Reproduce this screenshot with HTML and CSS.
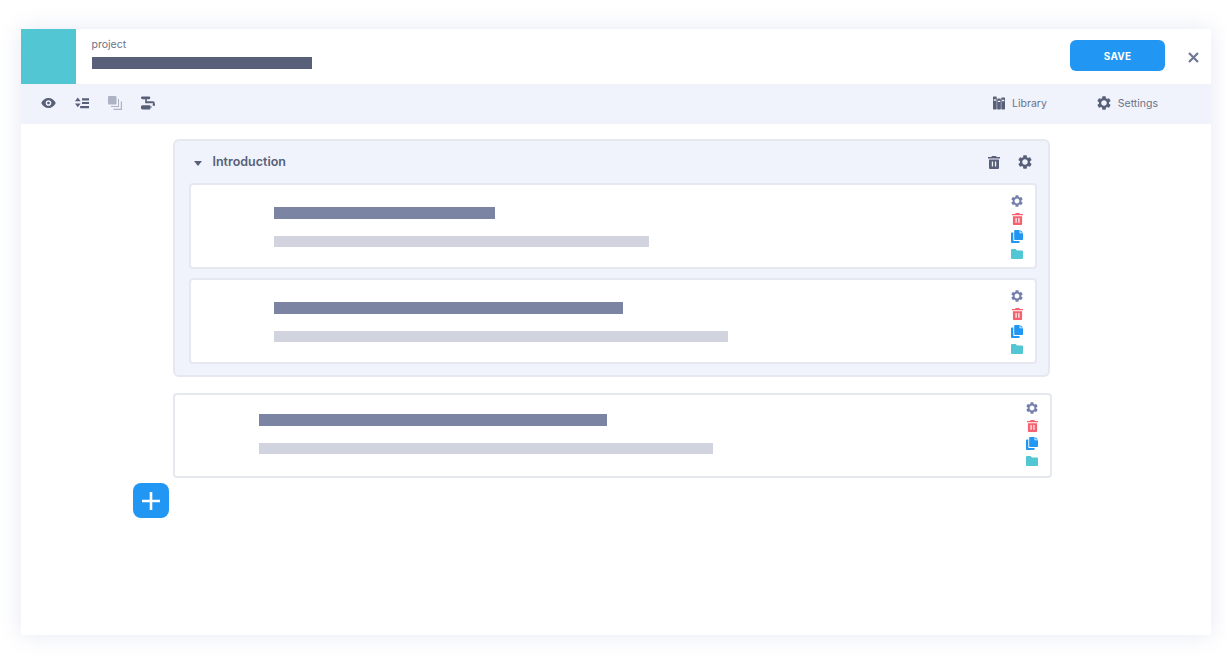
FILE: index.html
```html
<!DOCTYPE html>
<html>

<head>
	<meta charset="UTF-8">
	<title>Project editor</title>
	<link rel="stylesheet" href="styles.css">
</head>

<body>
	<!--icons used more than once-->
	<svg class="defs" width="0" height="0">
		<symbol id="i-gear" viewBox="2 2 20 20">
			<path d="M19.14 12.94c.04-.3.06-.61.06-.94 0-.32-.02-.64-.07-.94l2.03-1.58c.18-.14.23-.41.12-.61l-1.92-3.32c-.12-.22-.37-.29-.59-.22l-2.39.96c-.5-.38-1.03-.7-1.62-.94l-.36-2.54c-.04-.24-.24-.41-.48-.41h-3.84c-.24 0-.43.17-.47.41l-.36 2.54c-.59.24-1.13.57-1.62.94l-2.39-.96c-.22-.08-.47 0-.59.22L2.74 8.87c-.12.21-.08.47.12.61l2.03 1.58c-.05.3-.09.63-.09.94s.02.64.07.94l-2.03 1.58c-.18.14-.23.41-.12.61l1.92 3.32c.12.22.37.29.59.22l2.39-.96c.5.38 1.03.7 1.62.94l.36 2.54c.05.24.24.41.48.41h3.84c.24 0 .44-.17.47-.41l.36-2.54c.59-.24 1.13-.56 1.62-.94l2.39.96c.22.08.47 0 .59-.22l1.92-3.32c.12-.22.07-.47-.12-.61l-2.01-1.58zM12 16c-2.2 0-4-1.8-4-4s1.8-4 4-4 4 1.8 4 4-1.8 4-4 4z" fill="currentColor"/>
		</symbol>
		<symbol id="i-trash" viewBox="0 0 12 13">
			<path fill-rule="evenodd" d="M4 0h4l.6 1H12v1.500H0V1h3.400zM1 3.500h10V12a1 1 0 0 1-1 1H2a1 1 0 0 1-1-1zM3.800 5.500v5h1.300v-5zm3.100 0v5h1.300v-5z" fill="currentColor"/>
		</symbol>
		<symbol id="i-copy" viewBox="0 0 12 13">
			<path d="M4 0h4.600v3.200H12V9.200a.8.800 0 0 1-.8.8H4a.8.800 0 0 1-.8-.8V.8A.8.800 0 0 1 4 0zM9.400 0 12 2.500H9.400zM0 3.400a.8.800 0 0 1 .8-.8h1.500v7.600c0 .4.300.7.700.7h5.600v1.300a.8.800 0 0 1-.8.800H.8a.8.800 0 0 1-.8-.8z" fill="currentColor"/>
		</symbol>
		<symbol id="i-folder" viewBox="0 0 12 10">
			<path d="M0 1a1 1 0 0 1 1-1h3.600L6 1.400h5a1 1 0 0 1 1 1V9a1 1 0 0 1-1 1H1a1 1 0 0 1-1-1z" fill="currentColor"/>
		</symbol>
	</svg>

	<div class="window">
		<div class="topbar">
			<div class="logo"></div>
			<div class="project">
				<span class="project-label">project</span>
				<div class="bar project-name"></div>
			</div>
			<button class="save" type="button">SAVE</button>
			<button class="close" type="button">
				<svg width="11" height="11" viewBox="0 0 11 11"><path d="M1 1l9 9M10 1l-9 9" stroke="currentColor" stroke-width="2.200" fill="none"/></svg>
			</button>
		</div>

		<div class="toolbar">
			<div class="tools">
				<svg class="tool" width="15" height="10" viewBox="0 0 16 11"><path fill-rule="evenodd" d="M8 0c3.600 0 6.500 2.300 8 5.500C14.500 8.700 11.600 11 8 11S1.500 8.700 0 5.500C1.500 2.300 4.400 0 8 0zm0 2.400a3.100 3.100 0 1 0 0 6.200 3.100 3.100 0 0 0 0-6.200zM8 4a1.500 1.500 0 1 1 0 3 1.500 1.500 0 0 1 0-3z" fill="currentColor"/></svg>
				<svg class="tool" width="14" height="12" viewBox="0 0 15 12"><path d="M3 0l3 4H0zM3 10.500L0 6.500h6zM7.500 1H15v2.200H7.500zM7.500 5H15v2.200H7.500zM5.500 9.300H15v2.200H5.500z" fill="currentColor"/></svg>
				<svg class="tool tool-off" width="14" height="14" viewBox="0 0 14 14"><rect width="8.500" height="8.500" rx="1" fill="currentColor"/><path d="M10 3h1v8H3v-1h7zM12.800 5.500H14V14H5.500v-1.200h7.300z" fill="currentColor"/></svg>
				<svg class="tool" width="14" height="14" viewBox="0 0 15 14"><path d="M1.500 0h7a1.500 1.500 0 0 1 0 3H6.200v2h6.600c1.100 0 1.900.8 1.900 1.900v1.400h.3v1.700h-2.500V8.300h.3V7.200H4.500V3h-3a1.500 1.500 0 0 1 0-3zM2 9.500h8v1.200h1.600v1.200H10v1.600a.5.500 0 0 1-.5.500H2a2.200 2.200 0 0 1 0-4.500z" fill="currentColor"/></svg>
			</div>
			<div class="links">
				<a class="link">
					<svg width="12" height="14" viewBox="0 0 13 14"><path fill-rule="evenodd" d="M.8 0h2.400a.8.800 0 0 1 .8.800v12.400a.8.800 0 0 1-.8.800H.8a.8.800 0 0 1-.8-.8V.8A.8.800 0 0 1 .8 0zm0 3v1.500h2.400V3zM5.300 2h2.400a.8.800 0 0 1 .8.800v10.400a.8.800 0 0 1-.8.800H5.300a.8.800 0 0 1-.8-.8V2.800a.8.800 0 0 1 .8-.8zm0 2.500V6h2.400V4.500zM9.800 1h2.400a.8.800 0 0 1 .8.800v11.400a.8.800 0 0 1-.8.800H9.800a.8.800 0 0 1-.8-.8V1.800a.8.800 0 0 1 .8-.8zm0 2.500V5h2.400V3.500z" fill="currentColor"/></svg>
					<span>Library</span>
				</a>
				<a class="link">
					<svg width="14" height="14"><use href="#i-gear"/></svg>
					<span>Settings</span>
				</a>
			</div>
		</div>

		<div class="content">
			<div class="section">
				<div class="section-head">
					<svg class="caret" width="8" height="5" viewBox="0 0 8 5"><path d="M0 0h8L4 5z" fill="currentColor"/></svg>
					<span class="section-title">Introduction</span>
					<svg class="head-trash" width="12" height="13"><use href="#i-trash"/></svg>
					<svg class="head-gear" width="14" height="14"><use href="#i-gear"/></svg>
				</div>
				<div class="card">
					<div class="card-text">
						<div class="bar title w221"></div>
						<div class="bar desc w375"></div>
					</div>
					<div class="actions">
						<svg class="a-gear" width="12" height="12"><use href="#i-gear"/></svg>
						<svg class="a-trash" width="11" height="12"><use href="#i-trash"/></svg>
						<svg class="a-copy" width="12" height="13"><use href="#i-copy"/></svg>
						<svg class="a-folder" width="12" height="10"><use href="#i-folder"/></svg>
					</div>
				</div>
				<div class="card">
					<div class="card-text">
						<div class="bar title w349"></div>
						<div class="bar desc w454"></div>
					</div>
					<div class="actions">
						<svg class="a-gear" width="12" height="12"><use href="#i-gear"/></svg>
						<svg class="a-trash" width="11" height="12"><use href="#i-trash"/></svg>
						<svg class="a-copy" width="12" height="13"><use href="#i-copy"/></svg>
						<svg class="a-folder" width="12" height="10"><use href="#i-folder"/></svg>
					</div>
				</div>
			</div>

			<div class="card card-loose">
				<div class="card-text">
					<div class="bar title w348"></div>
					<div class="bar desc w454"></div>
				</div>
				<div class="actions">
					<svg class="a-gear" width="12" height="12"><use href="#i-gear"/></svg>
					<svg class="a-trash" width="11" height="12"><use href="#i-trash"/></svg>
					<svg class="a-copy" width="12" height="13"><use href="#i-copy"/></svg>
					<svg class="a-folder" width="12" height="10"><use href="#i-folder"/></svg>
				</div>
			</div>

			<button class="add" type="button">
				<svg width="18" height="18" viewBox="0 0 18 18"><path d="M9 0v18M0 9h18" stroke="currentColor" stroke-width="2.600" fill="none"/></svg>
			</button>
		</div>
	</div>
</body>

</html>
```

FILE: styles.css
```css
/*CSS*/

body {
	margin: 0;
	padding: 29px 14px 27px 21px;
	height: 662px;
	box-sizing: border-box;
	overflow: hidden;
	background-color: #fff;
	font-family: "Inter", "Liberation Sans", sans-serif;
	color: #585f78;
}

.defs {
	display: none;
}

.window {
	height: 606px;
	background-color: #fff;
	box-shadow: 0 0 22px rgba(105, 120, 180, 0.16);
}

.bar {
	height: 12px;
}

/*header*/
.topbar {
	display: flex;
	align-items: center;
	height: 55px;
}

.logo {
	width: 55px;
	height: 55px;
	background-color: #52c6d2;
}

.project {
	flex: 1;
	padding: 0 0 4px 15.5px;
}

.project-label {
	display: block;
	font-size: 10.5px;
	line-height: 13px;
	margin-top: -2px;
	margin-bottom: 6px;
	color: #6b7289;
}

.project-name {
	width: 220.5px;
	background-color: #585f78;
}

.save {
	width: 95px;
	height: 31px;
	margin-bottom: 2px;
	border: 0;
	border-radius: 6px;
	background-color: #2196f3;
	color: #fff;
	font-family: inherit;
	font-size: 10px;
	font-weight: 700;
	letter-spacing: 0.2px;
}

.close {
	display: flex;
	width: 46px;
	padding: 2px 0 0 10px;
	justify-content: center;
	border: 0;
	background: none;
	color: #6f7893;
}

/*toolbar*/
.toolbar {
	display: flex;
	align-items: center;
	justify-content: space-between;
	box-sizing: border-box;
	height: 40px;
	padding: 0 53px 2px 20px;
	background-color: #f0f3fc;
}

.tools {
	display: flex;
	align-items: center;
	gap: 19px;
}

.tool-off {
	color: #adb2c4;
}

.links {
	display: flex;
	align-items: center;
	gap: 50px;
	font-size: 10.5px;
	color: #6b7289;
}

.link {
	display: flex;
	align-items: center;
	gap: 7px;
}

.link svg {
	color: #585f78;
}

/*content*/
.content {
	padding: 15px 0 0 112px;
}

.section {
	width: 877px;
	height: 238px;
	margin-left: 40px;
	box-sizing: border-box;
	padding: 0 11px 0 14px;
	border: 2px solid #e6e8f0;
	border-radius: 6px;
	background-color: #f0f3fc;
}

.section-head {
	display: flex;
	align-items: center;
	height: 42px;
}

.caret {
	margin: 3px 0 0 5px;
	color: #585f78;
}

.section-title {
	flex: 1;
	margin: 0 0 1px 10.5px;
	font-size: 12.5px;
	font-weight: 600;
	color: #585f78;
}

.head-gear {
	margin: 0 5px 0 18px;
}

.card {
	display: flex;
	justify-content: space-between;
	box-sizing: border-box;
	height: 86px;
	margin-bottom: 9px;
	border: 2px solid #e6e8f0;
	border-radius: 4px;
	background-color: #fff;
}

.card-text {
	padding: 22px 0 0 83px;
}

.title {
	background-color: #7c84a3;
	margin-bottom: 17px;
}

.desc {
	height: 11px;
	background-color: #d1d4de;
}

.w221 {
	width: 221px;
}

.w348 {
	width: 348px;
}

.w349 {
	width: 349px;
}

.w375 {
	width: 375px;
}

.w454 {
	width: 454px;
}

.actions {
	display: flex;
	flex-direction: column;
	align-items: center;
	gap: 5.5px;
	width: 12px;
	padding-top: 10px;
	margin-right: 12px;
}

.a-gear {
	color: #7480ab;
}

.a-trash {
	color: #f7606f;
}

.a-copy {
	color: #2196f3;
}

.a-folder {
	color: #52c6d2;
}

.card-loose {
	width: 879px;
	height: 85px;
	margin: 16px 0 5px 40px;
}

.card-loose .card-text {
	padding: 19px 0 0 84px;
}

.card-loose .actions {
	padding-top: 7px;
}

.add {
	display: flex;
	align-items: center;
	justify-content: center;
	width: 36px;
	height: 35px;
	padding: 0;
	border: 0;
	border-radius: 8px;
	background-color: #2196f3;
	color: #fff;
}
```
